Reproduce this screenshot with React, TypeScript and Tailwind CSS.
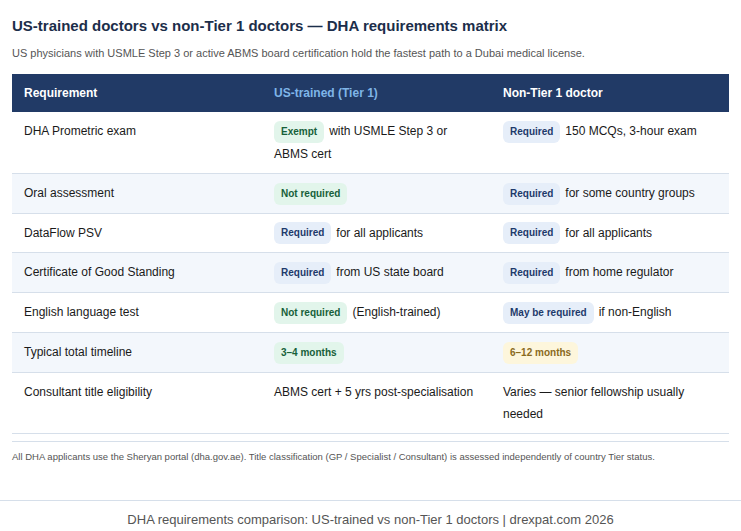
import React from "react";

type B = { t: string; k: "g" | "b" | "y" };
type C = { badge?: B; text?: string };
const badgeCls = {
  g: "bg-[#e2f5eb] text-[#17603a]",
  b: "bg-[#e6eef9] text-[#1e3a6b]",
  y: "bg-[#fdf6dc] text-[#8a6a1c]",
};
const rows: { r: string; a: C; b: C }[] = [
  { r: "DHA Prometric exam", a: { badge: { t: "Exempt", k: "g" }, text: "with USMLE Step 3 or ABMS cert" }, b: { badge: { t: "Required", k: "b" }, text: "150 MCQs, 3-hour exam" } },
  { r: "Oral assessment", a: { badge: { t: "Not required", k: "g" } }, b: { badge: { t: "Required", k: "b" }, text: "for some country groups" } },
  { r: "DataFlow PSV", a: { badge: { t: "Required", k: "b" }, text: "for all applicants" }, b: { badge: { t: "Required", k: "b" }, text: "for all applicants" } },
  { r: "Certificate of Good Standing", a: { badge: { t: "Required", k: "b" }, text: "from US state board" }, b: { badge: { t: "Required", k: "b" }, text: "from home regulator" } },
  { r: "English language test", a: { badge: { t: "Not required", k: "g" }, text: "(English-trained)" }, b: { badge: { t: "May be required", k: "b" }, text: "if non-English" } },
  { r: "Typical total timeline", a: { badge: { t: "3–4 months", k: "g" } }, b: { badge: { t: "6–12 months", k: "y" } } },
  { r: "Consultant title eligibility", a: { text: "ABMS cert + 5 yrs post-specialisation" }, b: { text: "Varies — senior fellowship usually needed" } },
];

function Cell({ c }: { c: C }) {
  return (
    <div className="px-3 py-2 text-[12px] leading-[22px] text-[#1a1a1a]">
      {c.badge && (
        <span className={`inline-block align-middle rounded-md px-[7px] py-[4px] text-[10px] font-bold leading-[14px] mr-[5px] ${badgeCls[c.badge.k]}`}>{c.badge.t}</span>
      )}
      {c.text}
    </div>
  );
}

export default function App() {
  return (
    <div className="w-[741px] h-[531px] bg-white overflow-hidden" style={{ fontFamily: '"Liberation Sans", Arial, sans-serif' }}>
      <div className="px-3">
        <h1 className="pt-[16px] text-[15px] font-bold text-[#1c2e4a] leading-[20px]">US-trained doctors vs non-Tier 1 doctors — DHA requirements matrix</h1>
        <p className="mt-[10px] text-[11px] text-[#555] leading-[14px]">US physicians with USMLE Step 3 or active ABMS board certification hold the fastest path to a Dubai medical license.</p>
        <div className="mt-[14px] w-[717px]">
          <div className="grid grid-cols-[250px_229px_238px] bg-[#213a66] text-[12px] font-bold h-[38px] items-center">
            <div className="px-3 text-white">Requirement</div>
            <div className="px-3 text-[#7fb5e8]">US-trained (Tier 1)</div>
            <div className="px-3 text-white">Non-Tier 1 doctor</div>
          </div>
          {rows.map((row, i) => (
            <div key={i} className={`grid grid-cols-[250px_229px_238px] border-b border-[#d6dfea] ${i % 2 === 1 ? "bg-[#f3f7fc]" : "bg-white"}`}>
              <div className="px-3 py-2 text-[12px] leading-[22px] text-[#1a1a1a]">{row.r}</div>
              <Cell c={row.a} />
              <Cell c={row.b} />
            </div>
          ))}
          <div className="mt-[7px] border-t border-[#d6dfea]" />
        </div>
      </div>
      <p className="mt-[9px] px-3 text-[9.5px] text-[#555] leading-[12px]">All DHA applicants use the Sheryan portal (dha.gov.ae). Title classification (GP / Specialist / Consultant) is assessed independently of country Tier status.</p>
      <div className="mt-[37px] border-t border-[#d6dfea] pt-[10px] text-center text-[13px] text-[#555] leading-[18px]">DHA requirements comparison: US-trained vs non-Tier 1 doctors | drexpat.com 2026</div>
    </div>
  );
}
